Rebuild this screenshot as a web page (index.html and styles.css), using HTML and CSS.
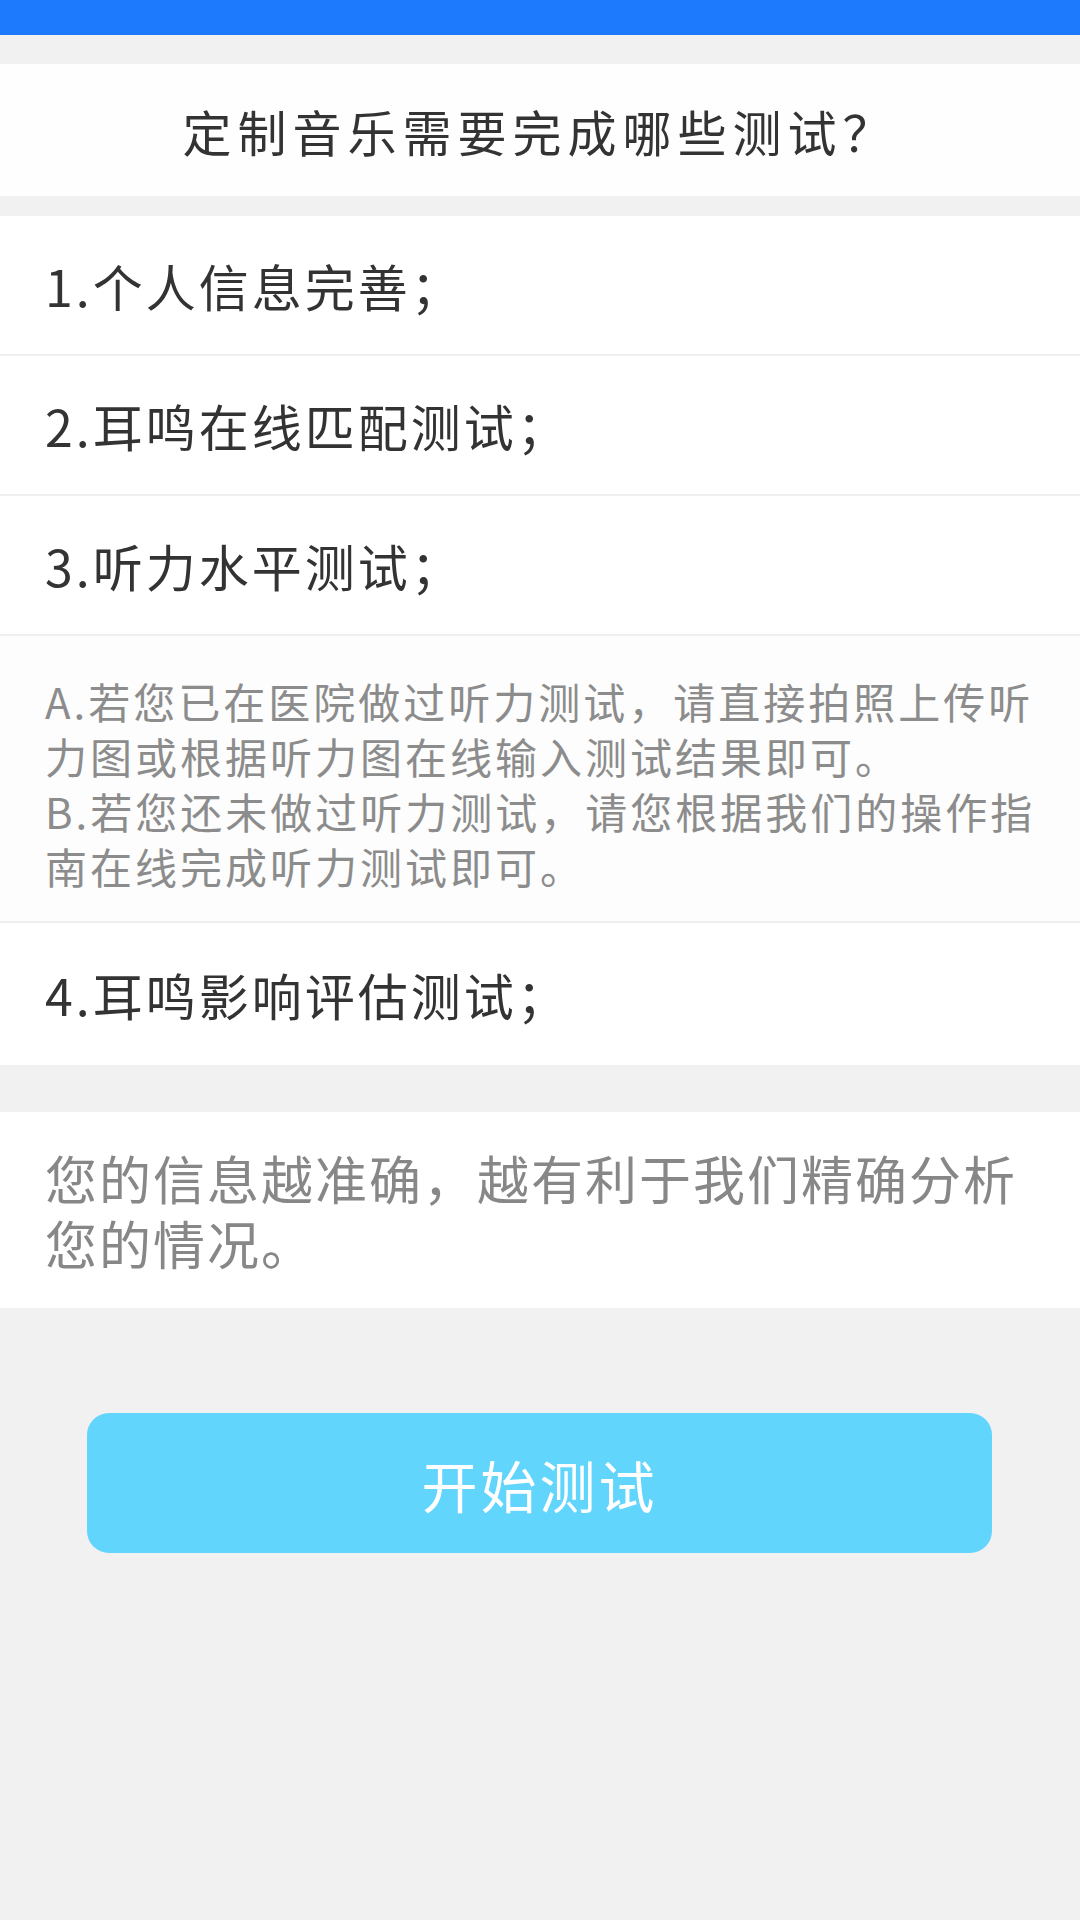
FILE: index.html
```html
<!DOCTYPE html>
<html lang="zh-CN">
<head>
  <meta charset="UTF-8" />
  <meta name="viewport" content="width=device-width, initial-scale=1.0"/>
  <title>定制音乐</title>
  <link rel="stylesheet" href="styles.css">
</head>
<body>
  <div class="status-bar"></div>

  <div class="header">
    <h1>定制音乐需要完成哪些测试？</h1>
  </div>

  <div class="steps">
    <div class="step">1.个人信息完善；</div>
    <div class="step">2.耳鸣在线匹配测试；</div>
    <div class="step">3.听力水平测试；</div>
    <div class="note">
      <p>A.若您已在医院做过听力测试，请直接拍照上传听力图或根据听力图在线输入测试结果即可。</p>
      <p>B.若您还未做过听力测试，请您根据我们的操作指南在线完成听力测试即可。</p>
    </div>
    <div class="step last">4.耳鸣影响评估测试；</div>
  </div>

  <div class="tip">
    您的信息越准确，越有利于我们精确分析您的情况。
  </div>

  <div class="actions">
    <button class="start" id="startBtn">开始测试</button>
  </div>
</body>
</html>
```

FILE: styles.css
```css
body {
  margin: 0;
  background: #f0f1f0;
  font-family: "Noto Sans CJK SC", "Noto Sans", sans-serif;
  color: #333;
}
.status-bar {
  height: 35px;
  background: #1d7afc;
}
.header {
  margin-top: 29px;
  height: 132px;
  background: #fdfefd;
  display: flex;
  align-items: center;
  justify-content: center;
}
.header h1 {
  margin: 0;
  font-size: 49px;
  font-weight: normal;
  letter-spacing: 6px;
  color: #333;
}
.steps {
  margin-top: 20px;
  background: #fff;
}
.step {
  height: 138px;
  display: flex;
  align-items: center;
  padding: 0 45px;
  font-size: 50px;
  letter-spacing: 3px;
  color: #333;
  border-bottom: 2px solid #eef0ee;
}
.step.last { height: 142px; border-bottom: none; }
.note {
  padding: 37px 30px 30px 45px;
  height: 218px;
  font-size: 42px;
  letter-spacing: 3px;
  line-height: 55px;
  color: #8c8c8c;
  background: #fcfdfc;
  border-bottom: 2px solid #eef0ee;
}
.note p { margin: 0; }
.tip {
  margin-top: 47px;
  padding: 33px 45px;
  background: #fff;
  font-size: 52px;
  letter-spacing: 2px;
  line-height: 65px;
  color: #878787;
}
.actions {
  padding: 105px 88px 0 87px;
}
.start {
  display: block;
  width: 100%;
  height: 140px;
  border: none;
  border-radius: 22px;
  background: #62d5fd;
  color: #fff;
  font-family: inherit;
  font-size: 56px;
  letter-spacing: 3px;
  cursor: pointer;
}
.start:hover { opacity: 0.9; }
```
